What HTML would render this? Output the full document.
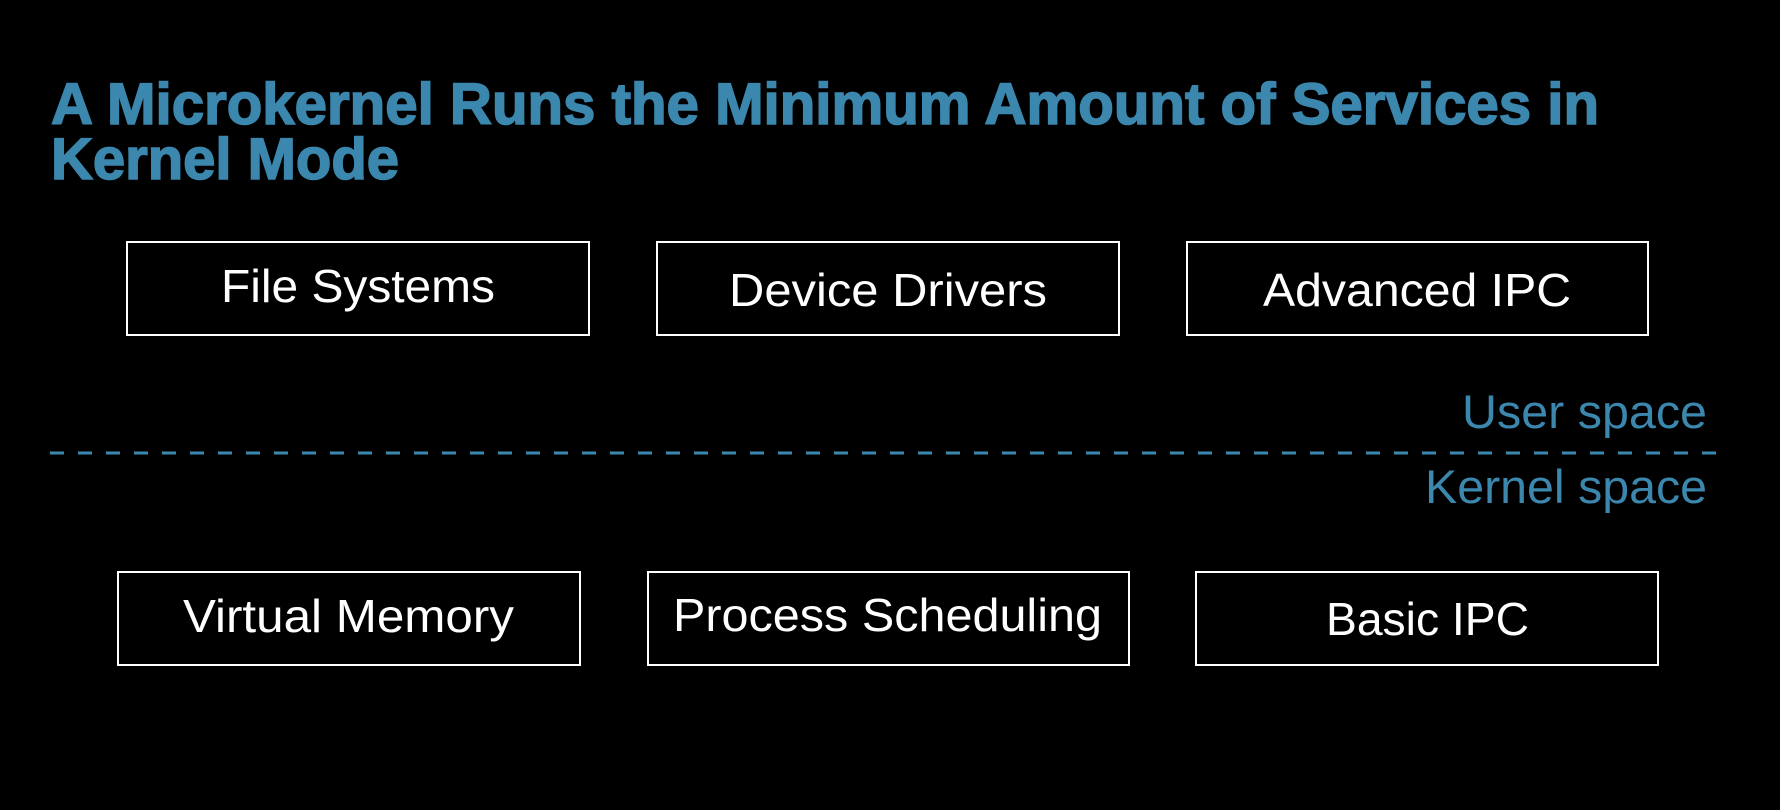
<!DOCTYPE html>
<html><head><meta charset="utf-8"><style>
html,body{margin:0;padding:0;background:#000;width:1780px;height:810px;overflow:hidden}
svg{display:block}
</style></head><body>
<svg width="1780" height="810" viewBox="0 0 1780 810" xmlns="http://www.w3.org/2000/svg">
<rect width="1780" height="810" fill="#000"/>
<g font-family="'Liberation Sans', sans-serif" font-weight="bold" font-size="58" fill="#3b87ae" stroke="#3b87ae" stroke-width="1.6">
<text x="51" y="124" textLength="1548" lengthAdjust="spacingAndGlyphs">A Microkernel Runs the Minimum Amount of Services in</text>
<text x="51" y="179" textLength="348" lengthAdjust="spacingAndGlyphs">Kernel Mode</text>
</g>
<g fill="none" stroke="#fff" stroke-width="2">
<rect x="127" y="242" width="462" height="93"/>
<rect x="657" y="242" width="462" height="93"/>
<rect x="1187" y="242" width="461" height="93"/>
<rect x="118" y="572" width="462" height="93"/>
<rect x="648" y="572" width="481" height="93"/>
<rect x="1196" y="572" width="462" height="93"/>
</g>
<line x1="50" y1="453" x2="1726" y2="453" stroke="#3b87ae" stroke-width="3" stroke-dasharray="14 14"/>
<g font-family="'Liberation Sans', sans-serif" font-size="46" fill="#fff">
<text x="221" y="302" textLength="274" lengthAdjust="spacingAndGlyphs">File Systems</text>
<text x="729" y="306" textLength="318" lengthAdjust="spacingAndGlyphs">Device Drivers</text>
<text x="1263" y="306" textLength="308" lengthAdjust="spacingAndGlyphs">Advanced IPC</text>
<text x="183" y="632" textLength="331" lengthAdjust="spacingAndGlyphs">Virtual Memory</text>
<text x="673" y="631" textLength="429" lengthAdjust="spacingAndGlyphs">Process Scheduling</text>
<text x="1326" y="635" textLength="203" lengthAdjust="spacingAndGlyphs">Basic IPC</text>
</g>
<g font-family="'Liberation Sans', sans-serif" font-size="47" fill="#3b87ae">
<text x="1462" y="428" textLength="245" lengthAdjust="spacingAndGlyphs">User space</text>
<text x="1425" y="503" textLength="282" lengthAdjust="spacingAndGlyphs">Kernel space</text>
</g>
</svg>
</body></html>
